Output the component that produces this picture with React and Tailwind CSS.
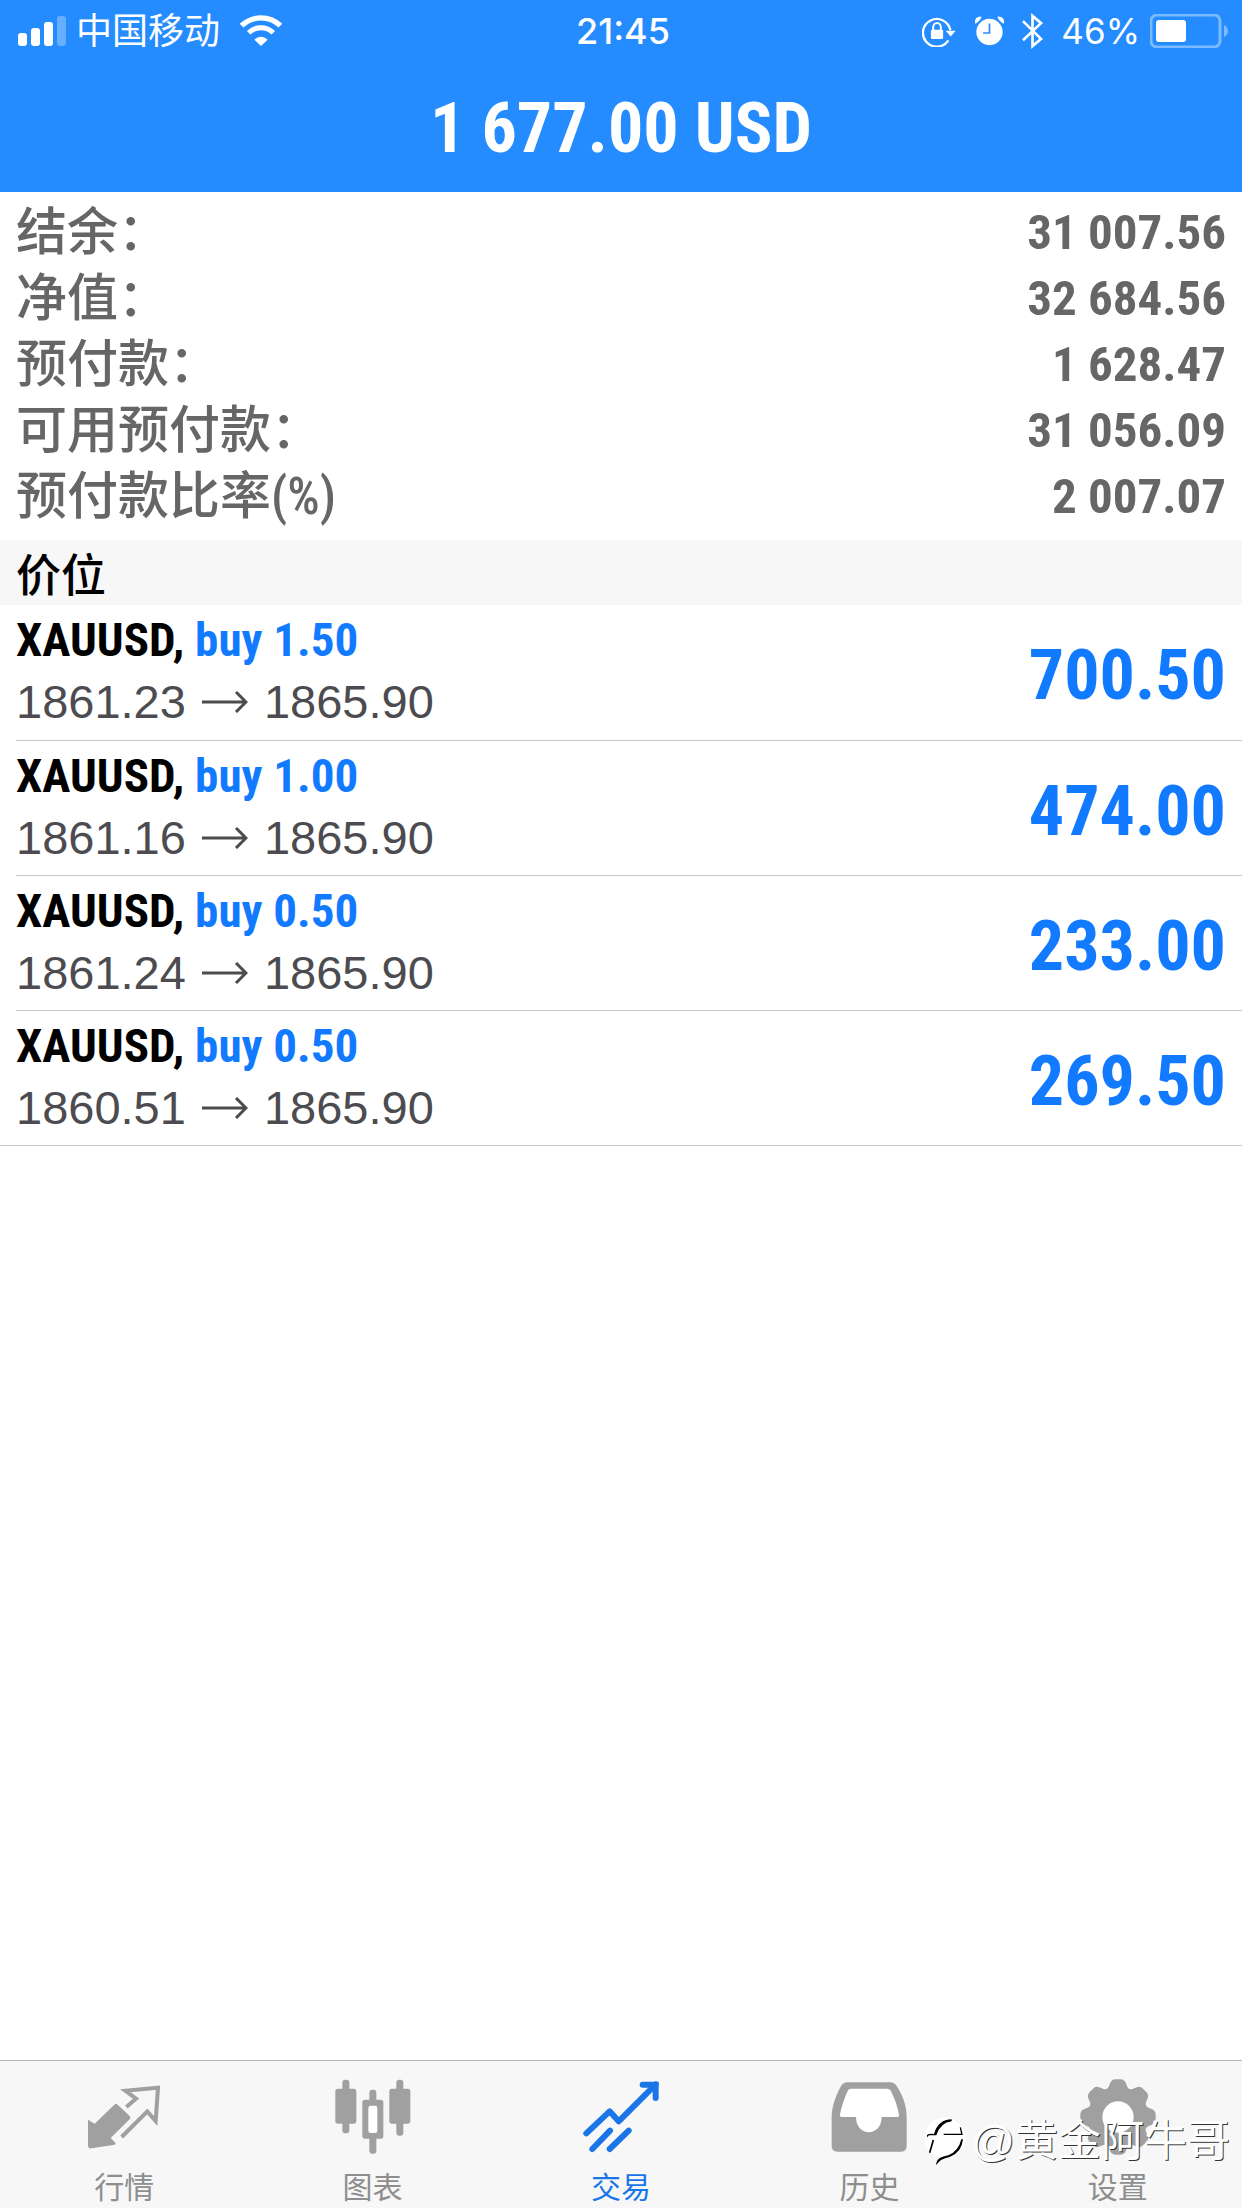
import clsx from "clsx";

const summary = [
  { id: 1, label: "结余：", value: "31 007.56" },
  { id: 2, label: "净值：", value: "32 684.56" },
  { id: 3, label: "预付款：", value: "1 628.47" },
  { id: 4, label: "可用预付款：", value: "31 056.09" },
  { id: 5, label: "预付款比率(%)", value: "2 007.07" },
];

const positions = [
  { id: 1, symbol: "XAUUSD", side: "buy 1.50", open: "1861.23", current: "1865.90", profit: "700.50" },
  { id: 2, symbol: "XAUUSD", side: "buy 1.00", open: "1861.16", current: "1865.90", profit: "474.00" },
  { id: 3, symbol: "XAUUSD", side: "buy 0.50", open: "1861.24", current: "1865.90", profit: "233.00" },
  { id: 4, symbol: "XAUUSD", side: "buy 0.50", open: "1860.51", current: "1865.90", profit: "269.50" },
];

const tabs = [
  { id: "quotes", name: "行情", icon: QuotesIcon },
  { id: "charts", name: "图表", icon: ChartsIcon },
  { id: "trade", name: "交易", icon: TradeIcon },
  { id: "history", name: "历史", icon: HistoryIcon },
  { id: "settings", name: "设置", icon: SettingsIcon },
];

const teeth = [0, 45, 90, 135, 180, 225, 270, 315];

function QuotesIcon() {
  return (
    <svg viewBox="0 0 234 234" className="size-[78px]" fill="currentColor" aria-hidden="true">
      <path d="M9 125L29 137L88 80Q93 75 98 80L134 114Q139 119 134 124L77 180L91 194Q93 199 89 200L20 211Q9 213 9 202Z" />
      <path d="M124 87L153 62L121 38L219 29L212 129L187 100L110 177" fill="none" stroke="currentColor" strokeWidth="12" />
    </svg>
  );
}

function ChartsIcon() {
  return (
    <svg viewBox="0 0 234 234" className="size-[78px]" fill="currentColor" aria-hidden="true">
      <rect x="25" y="5" width="21" height="161" rx="9" />
      <rect x="4" y="32" width="63" height="105" rx="8" />
      <rect x="106" y="35" width="21" height="192" rx="9" />
      <rect x="85" y="65" width="63" height="117" rx="8" />
      <rect x="103" y="83" width="27" height="82" rx="7" fill="#fff" />
      <rect x="187" y="5" width="21" height="168" rx="9" />
      <rect x="166" y="32" width="63" height="105" rx="8" />
    </svg>
  );
}

function TradeIcon() {
  return (
    <svg viewBox="0 0 234 234" className="size-[78px]" fill="none" stroke="currentColor" strokeWidth="18" strokeLinecap="round" aria-hidden="true">
      <path d="M13 166L83 100L110 130L221 19" strokeLinejoin="round" />
      <path d="M182 20H221V60" />
      <path d="M31 213L84 158M83 213L140 158" />
    </svg>
  );
}

function HistoryIcon() {
  return (
    <svg viewBox="0 0 234 234" className="size-[78px]" fill="currentColor" aria-hidden="true">
      <path d="M5 115C6 80 22 44 33 24Q40 13 52 13H181Q193 13 200 24C214 44 230 80 230 115V204Q230 221 213 221H22Q5 221 5 204Z" />
      <path d="M64 32H170Q180 32 184 41C194 62 203 85 207 110Q208 117 201 117H155C155 178 78 178 78 117H36Q28 117 30 109C34 85 44 60 52 41Q55 32 64 32Z" fill="#fff" />
    </svg>
  );
}

function SettingsIcon() {
  return (
    <svg viewBox="0 0 234 234" className="size-[78px]" fill="currentColor" aria-hidden="true">
      <circle cx="117" cy="117" r="91" />
      {teeth.map((angle) => (
        <path
          key={angle}
          d="M75 38C92 34 90 15 98 8Q102 4 110 4H124Q132 4 136 8C144 15 142 34 159 38L140 60H94Z"
          transform={`rotate(${angle} 117 117)`}
        />
      ))}
      <circle cx="117" cy="117" r="47" fill="#fff" />
    </svg>
  );
}

function SignalIcon() {
  return (
    <svg viewBox="0 0 48 32" className="h-8 w-12" fill="currentColor" aria-hidden="true">
      <rect x="0" y="18" width="9" height="13" rx="3" />
      <rect x="13" y="13" width="9" height="18" rx="3" />
      <rect x="26" y="7" width="9" height="24" rx="3" />
      <rect x="39" y="1" width="9" height="30" rx="3" opacity="0.3" />
    </svg>
  );
}

function WifiIcon() {
  return (
    <svg viewBox="0 0 126 96" className="h-8 w-[42px]" aria-hidden="true">
      <path d="M5 32A84 84 0 0 1 121 32" fill="none" stroke="currentColor" strokeWidth="16" />
      <path d="M26 53A53 53 0 0 1 100 53" fill="none" stroke="currentColor" strokeWidth="15" />
      <path d="M43 74A28 28 0 0 1 83 74L63 93Z" fill="currentColor" />
    </svg>
  );
}

function LockRotationIcon() {
  return (
    <svg viewBox="0 0 100 94" className="h-[31px] w-[33px]" aria-hidden="true">
      <path d="M80 74A42 42 0 1 1 86 43" fill="none" stroke="currentColor" strokeWidth="7" />
      <path d="M72 45H102L87 62Z" fill="currentColor" />
      <rect x="27" y="42" width="37" height="28" rx="4" fill="currentColor" />
      <path d="M34 44V34A11 12 0 0 1 57 34V44" fill="none" stroke="currentColor" strokeWidth="6" />
    </svg>
  );
}

function AlarmIcon() {
  return (
    <svg viewBox="0 0 86 88" className="h-[30px] w-[29px]" aria-hidden="true">
      <circle cx="43" cy="47" r="39" fill="currentColor" />
      <path d="M2 20Q0 3 17 3Q14 13 2 20ZM84 20Q86 3 69 3Q72 13 84 20Z" fill="currentColor" stroke="currentColor" strokeWidth="4" strokeLinejoin="round" />
      <path d="M43 22V50H24" fill="none" stroke="#258cff" strokeWidth="5" />
    </svg>
  );
}

function BluetoothIcon() {
  return (
    <svg viewBox="0 0 64 108" className="h-9 w-[21px]" fill="none" stroke="currentColor" strokeWidth="8" aria-hidden="true">
      <path d="M3 24L58 78L32 100V8L58 30L3 82" />
    </svg>
  );
}

function BatteryIcon() {
  return (
    <svg viewBox="0 0 78 34" className="h-[34px] w-[78px]" aria-hidden="true">
      <rect x="1" y="1" width="69" height="32" rx="6" fill="none" stroke="#fff" strokeWidth="3" opacity="0.4" />
      <rect x="6" y="6" width="30" height="22" rx="3" fill="#fff" />
      <path d="M74 11Q78 13 78 17T74 23Z" fill="#fff" opacity="0.4" />
    </svg>
  );
}

function Watermark() {
  return (
    <div className="pointer-events-none absolute right-3 bottom-10 flex items-center">
      <svg viewBox="0 0 132 150" className="mr-1 h-[50px] w-11" aria-hidden="true">
        <circle cx="66" cy="66" r="62" fill="#fff" />
        <path d="M12 64V57Q18 52 33 54Q46 10 86 10V16Q52 20 40 58H18Z" fill="#000" />
        <path d="M62 55H119M117 56L112 34" fill="none" stroke="#000" strokeWidth="4" />
        <path d="M31 72L20 110" fill="none" stroke="#000" strokeWidth="5" />
        <path d="M40 147Q38 136 50 126Q60 122 76 118Q106 106 115 70H120Q116 110 80 123Q66 126 54 132Q46 138 40 147Z" fill="#000" />
      </svg>
      <span className="text-[43px] leading-[54px] text-white [text-shadow:1px_1px_0_#333]">@黄金阿牛哥</span>
    </div>
  );
}

export default function App() {
  const activeTab = "trade";

  return (
    <div className="flex min-h-screen flex-col bg-white font-['Liberation_Sans','Noto_Sans_CJK_SC',sans-serif]">
      <header className="h-[192px] bg-[#258cff] text-white">
        <div className="grid h-[62px] grid-cols-3 items-center pr-[14px] pl-[18px] font-['Inter','Noto_Sans_CJK_SC',sans-serif] text-4xl">
          <div className="flex items-center">
            <SignalIcon />
            <span className="mr-5 ml-2.5">中国移动</span>
            <WifiIcon />
          </div>
          <time className="text-center font-medium">21:45</time>
          <div className="flex items-center justify-end">
            <LockRotationIcon />
            <span className="mr-[18px] ml-5"><AlarmIcon /></span>
            <BluetoothIcon />
            <span className="mr-2.5 ml-[18px] text-[35px]">46%</span>
            <BatteryIcon />
          </div>
        </div>
        <h1 className="text-center font-['Roboto_Condensed','Liberation_Sans',sans-serif] text-[70px] leading-[132px] font-bold">
          1 677.00 USD
        </h1>
      </header>

      <main className="flex-1">
        <dl className="px-4 pt-2 pb-2.5 font-['Roboto_Condensed','Noto_Sans_CJK_SC',sans-serif] leading-[66px] text-[#666]">
          {summary.map((item) => (
            <div key={item.id} className="flex justify-between">
              <dt className="text-[51px] font-medium">{item.label}</dt>
              <dd className="text-[49px] font-bold">{item.value}</dd>
            </div>
          ))}
        </dl>

        <h2 className="bg-[#f7f7f7] px-4 font-['Noto_Sans_CJK_SC',sans-serif] text-[45px] leading-[65px] font-medium text-black">价位</h2>

        <ul className="border-b border-[#c8c7cc]">
          {positions.map((item, i) => (
            <li
              key={item.id}
              className={clsx("ml-4 flex h-[135px] justify-between pr-4", i > 0 && "border-t border-[#c8c7cc]")}
            >
              <div className="pt-1">
                <p className="font-['Roboto_Condensed','Liberation_Sans',sans-serif] text-[47px] leading-[62px] font-bold text-black">
                  {item.symbol}, <span className="text-[#127aff]">{item.side}</span>
                </p>
                <p className="flex items-center text-[47px] leading-[62px] text-[#4c4c50]">
                  {item.open}
                  <svg viewBox="0 0 46 22" className="mx-4 h-[22px] w-[46px]" fill="none" stroke="currentColor" strokeWidth="3" aria-hidden="true">
                    <path d="M0 11H44M34 1L44 11L34 21" />
                  </svg>
                  {item.current}
                </p>
              </div>
              <p className="pt-1.5 font-['Roboto_Condensed','Liberation_Sans',sans-serif] text-[70px] leading-[129px] font-bold text-[#127aff]">
                {item.profit}
              </p>
            </li>
          ))}
        </ul>
      </main>

      <nav className="relative flex h-[148px] border-t border-[#b5b5b5] bg-[#f7f7f7]">
        {tabs.map((tab) => (
          <button
            key={tab.id}
            type="button"
            className={clsx(
              "flex flex-1 flex-col items-center pt-[17px]",
              tab.id === activeTab ? "text-[#1a76e8]" : "text-[#a0a0a0]"
            )}
          >
            <tab.icon />
            <span className={clsx("mt-3 text-3xl leading-10", tab.id !== activeTab && "text-[#8e8e8e]")}>{tab.name}</span>
          </button>
        ))}
        <Watermark />
      </nav>
    </div>
  );
}
